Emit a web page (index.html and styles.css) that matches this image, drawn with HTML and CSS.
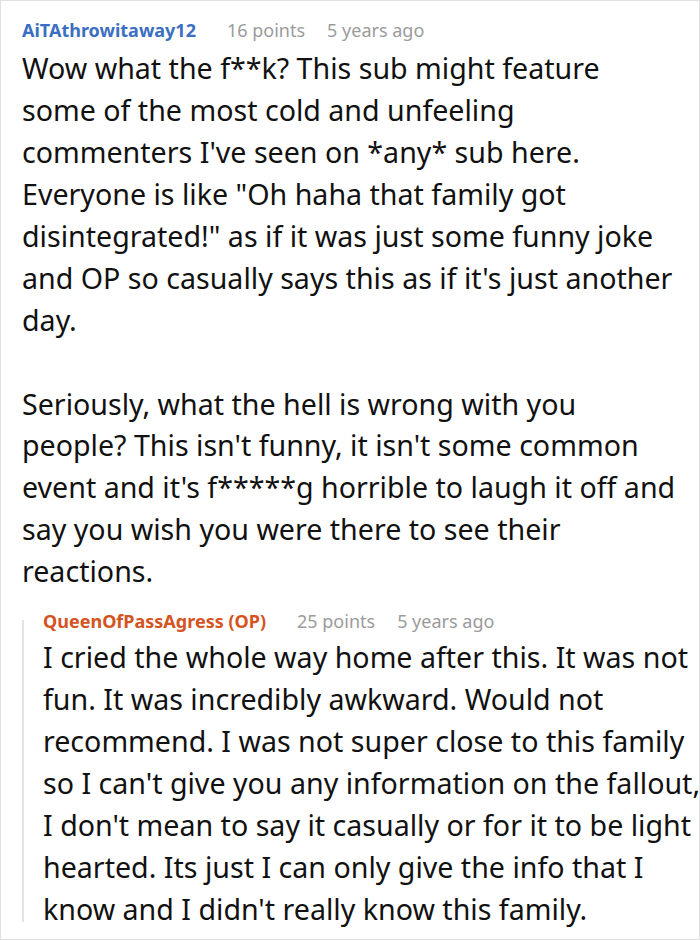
FILE: index.html
```html
<!DOCTYPE html>
<html>
<head>
<meta charset="utf-8">
<link rel="stylesheet" href="styles.css">
</head>
<body>
<div class="frame">
  <div class="comment">
    <div class="meta">
      <span class="user">AiTAthrowitaway12</span>
      <span class="info">16 points</span>
      <span class="info">5 years ago</span>
    </div>
    <div class="body">
      <p>Wow what the f**k? This sub might feature<br>some of the most cold and unfeeling<br>commenters I've seen on *any* sub here.<br>Everyone is like "Oh haha that family got<br>disintegrated!" as if it was just some funny joke<br>and OP so casually says this as if it's just another<br>day.</p>
      <p>Seriously, what the hell is wrong with you<br>people? This isn't funny, it isn't some common<br>event and it's f*****g horrible to laugh it off and<br>say you wish you were there to see their<br>reactions.</p>
    </div>
    <div class="reply">
      <div class="thread-line"></div>
      <div class="reply-content">
        <div class="meta">
          <span class="user op">QueenOfPassAgress (OP)</span>
          <span class="info">25 points</span>
          <span class="info">5 years ago</span>
        </div>
        <div class="body">
          <p>I cried the whole way home after this. It was not<br>fun. It was incredibly awkward. Would not<br>recommend. I was not super close to this family<br>so I can't give you any information on the fallout,<br>I don't mean to say it casually or for it to be light<br>hearted. Its just I can only give the info that I<br>know and I didn't really know this family.</p>
        </div>
      </div>
    </div>
  </div>
</div>
</body>
</html>
```
FILE: styles.css
```css
* { box-sizing: border-box; }
html, body { margin: 0; padding: 0; background: #fff; }
.frame {
  width: 700px;
  height: 940px;
  border: 1px solid #e0e0e0;
  overflow: hidden;
  font-family: "Noto Sans", "Open Sans", sans-serif;
  color: #111;
}
.comment { padding: 17.3px 1px 0 21px; }
.meta {
  display: flex;
  font-size: 18px;
  line-height: 24px;
  align-items: baseline;
  white-space: nowrap;
}
.user { font-weight: 700; color: #3b6fc2; margin-right: 31px; }
.user.op { color: #d4531f; }
.info { color: #9b9b9b; margin-right: 22px; }
.body {
  font-size: 28.6px;
  line-height: 41.9px;
  margin-top: 5px;
  white-space: nowrap;
}
.body p { margin: 0 0 41.9px 0; }
.body p:last-child { margin-bottom: 0; }
.reply {
  display: flex;
  margin-top: 17px;
}
.reply .body { margin-top: 3px; }
.thread-line {
  flex: none;
  width: 2px;
  background: #e3e3e3;
  margin: 11px 19px 7px 0;
}
.reply-content { flex: 1; min-width: 0; }
```
